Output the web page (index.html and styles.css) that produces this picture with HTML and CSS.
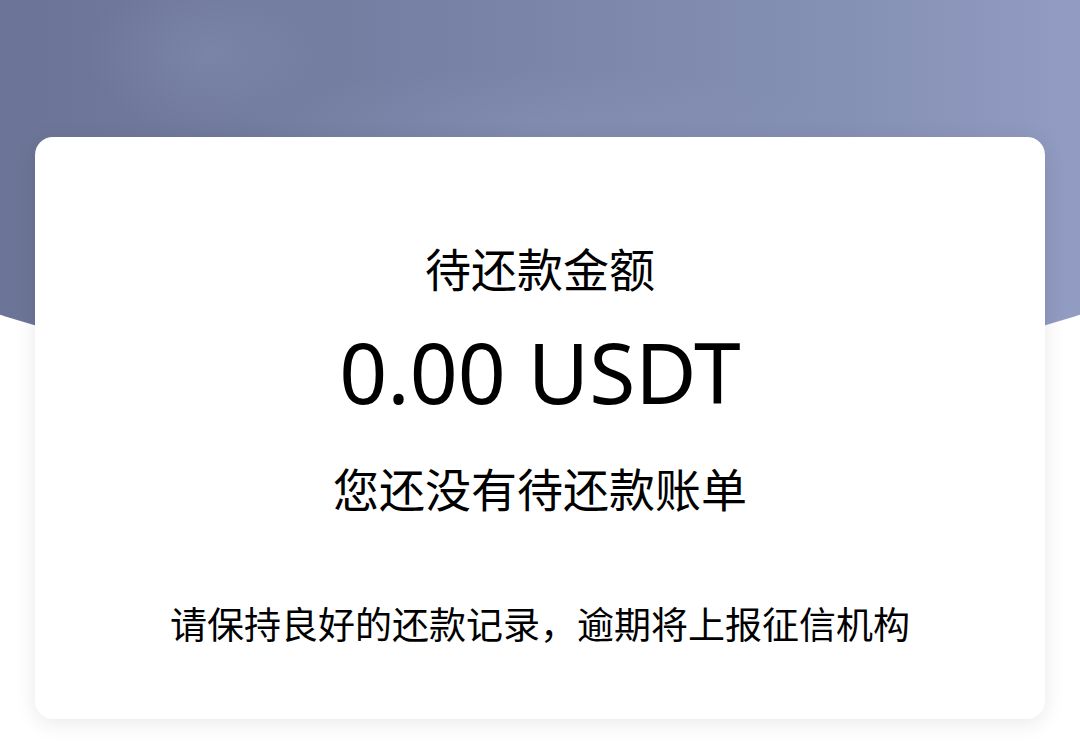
FILE: index.html
```html
<!DOCTYPE html>
<html lang="zh-CN">
<head>
    <meta charset="UTF-8">
    <meta name="viewport" content="width=device-width, initial-scale=1.0">
    <title>待还款</title>
    <link rel="stylesheet" href="styles.css">
</head>
<body>

    <div class="page">
        <div class="hero"></div>

        <div class="card">
            <div class="card-title">待还款金额</div>
            <div class="amount">0.00 USDT</div>
            <div class="empty-text">您还没有待还款账单</div>
            <div class="notice">请保持良好的还款记录，逾期将上报征信机构</div>
        </div>
    </div>

</body>
</html>
```

FILE: styles.css
```css
body {
    margin: 0;
    padding: 0;
    background-color: #fff;
    font-family: "Noto Sans", "Noto Sans CJK SC", sans-serif;
    color: #000;
    overflow: hidden;
}

.page {
    width: 1080px;
    height: 744px;
    overflow: hidden;
}

/* шапка с овальным низом, шире экрана */
.hero {
    width: 1512px;
    height: 386px;
    margin-left: -216px;
    border-radius: 0 0 756px 756px / 0 0 237px 237px;
    background:
        radial-gradient(ellipse 120px 80px at 28% 14%, rgba(140, 150, 185, 0.35), rgba(140, 150, 185, 0)),
        radial-gradient(ellipse 300px 60px at 50% 33%, rgba(150, 160, 195, 0.25), rgba(150, 160, 195, 0)),
        linear-gradient(90deg, #66708f 0%, #6c7597 16%, #7882a6 45%, #8590b5 70%, #939cc2 86%, #959ec4 100%);
}

.card {
    width: 1010px;
    box-sizing: border-box;
    margin: -249px auto 0;
    padding: 102px 0 69px;
    background-color: #fff;
    border-radius: 18px;
    box-shadow: 0 4px 22px rgba(0, 0, 0, 0.09);
    text-align: center;
    position: relative;
}

.card-title {
    font-size: 46px;
    line-height: 60px;
}

.amount {
    font-size: 84px;
    line-height: 100px;
    margin-top: 23px;
}

.empty-text {
    font-size: 46px;
    line-height: 60px;
    margin-top: 37px;
}

.notice {
    font-size: 37px;
    line-height: 50px;
    margin-top: 81px;
}
```
